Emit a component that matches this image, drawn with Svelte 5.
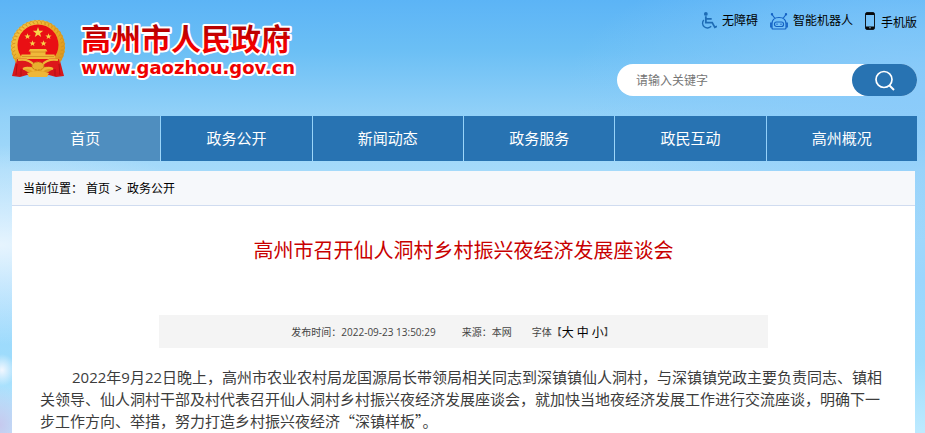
<script>
  const nav = ['首页', '政务公开', '新闻动态', '政务服务', '政民互动', '高州概况'];
  const star = 'M0-5L1.2-1.6 4.8-1.5 1.9.6 2.9 4 0 2-2.9 4-1.9.6-4.8-1.5-1.2-1.6Z';
  const beads = Array.from({ length: 30 }, (_, i) => 140 + (i * 260) / 29);
  let keyword = $state('');
</script>

<div class="page">
  <header>
    <a class="brand" href="#home" aria-label="高州市人民政府">
      <svg class="emblem" width="56" height="60" viewBox="0 0 56 60" aria-hidden="true">
        <defs>
          <linearGradient id="gold" x1="0" y1="0" x2="1" y2="1">
            <stop offset="0" stop-color="#f9cf52" />
            <stop offset=".5" stop-color="#e9aa26" />
            <stop offset="1" stop-color="#d98f1c" />
          </linearGradient>
        </defs>
        <path d="M7 38L2 57 10 58 17 56 28 58 39 56 46 58 54 57 49 38Z" fill="#d4171b" />
        <circle cx="28" cy="28" r="27" fill="url(#gold)" />
        {#each beads as a}
          <path d="M23-2Q25-4 27-1Q25 2 23 2" fill="none" stroke="#d2921f" stroke-width=".6" transform="translate(28 28) rotate({a})" />
        {/each}
        <circle cx="28" cy="26" r="20.5" fill="#e90f14" />
        <path d={star} transform="translate(28 13.500) scale(1.1)" fill="#f8d34a" />
        <path d={star} transform="translate(17.500 17.500) scale(.65)" fill="#f8d34a" />
        <path d={star} transform="translate(38.500 17.500) scale(.65)" fill="#f8d34a" />
        <path d={star} transform="translate(22.500 24.500) scale(.65)" fill="#f8d34a" />
        <path d={star} transform="translate(33.500 24.500) scale(.65)" fill="#f8d34a" />
        <path d="M20 30h16l1.500 2.500h-2v3h9l1 4.500h-35l1-4.500h9v-3h-2z" fill="#f0b93a" />
        <path d="M20 33h16M12 37.500h32" stroke="#cf8a20" stroke-width=".8" />
        <path d="M7 40Q18 38 28 44Q38 38 49 40L52 55Q44 53 42 49Q36 46 28 50Q20 46 14 49Q12 53 4 55Z" fill="#dd171b" />
        <path d="M8 41Q18 39 24 46M48 41Q38 39 32 46M13 50Q19 47 24 52M43 50Q37 47 32 52" fill="none" stroke="#efb738" stroke-width="2.200" />
        <ellipse cx="28" cy="47" rx="6" ry="4" fill="#e9ae2e" stroke="#c37e19" stroke-width="1" stroke-dasharray="2 1" />
        <path d="M17 54Q28 50 39 54L37 58H19Z" fill="#efb738" />
        <path d="M7 45L6 56M49 45L50 56M11 50L11 57M45 50L45 57" fill="none" stroke="#b30e14" stroke-width="1" />
      </svg>
      <svg class="name" width="224" height="64" viewBox="0 0 224 64">
        <defs>
          <linearGradient id="red" gradientUnits="userSpaceOnUse" x1="0" y1="4" x2="0" y2="32">
            <stop offset=".3" stop-color="#b80000" />
            <stop offset=".75" stop-color="#f00000" />
          </linearGradient>
        </defs>
        <text class="cn" x="3" y="31" fill="url(#red)">高州市人民政府</text>
        <text class="url" x="3" y="55" fill="#ee0000">www.gaozhou.gov.cn</text>
      </svg>
    </a>

    <div class="tools">
      <ul class="links">
        <li>
          <a href="#accessible">
            <svg width="17" height="18" viewBox="0 0 16 17" fill="none" stroke="#1e6cb5">
              <circle cx="5.500" cy="1.800" r="1.800" fill="#1e6cb5" stroke="none" />
              <path d="M5.500 4v6h6l2.500 4.500 2-1M6 6.500h5" stroke-width="1.700" />
              <path d="M3.500 7.500a4.600 4.600 0 1 0 7 6" stroke-width="1.300" />
            </svg>
            无障碍
          </a>
        </li>
        <li>
          <a href="#robot">
            <svg width="18" height="17" viewBox="0 0 18 17" fill="none" stroke="#1462c4" stroke-width="1.200">
              <path d="M2 1.500l3 4M16 1.500l-3 4M2 11Q2 4.500 9 4.500T16 11V15Q16 16 15 16H3Q2 16 2 15ZM2 10H.7v4H2M16 10h1.300v4H16" />
              <rect x="4.500" y="9" width="9" height="4.500" rx="2" />
              <path d="M6.500 11.200h1M10.500 11.200h1" stroke-width="1.500" />
              <circle cx="2" cy="1.200" r=".6" /><circle cx="16" cy="1.200" r=".6" />
            </svg>
            智能机器人
          </a>
        </li>
        <li class="mobile">
          <a href="#mobile">
            <svg width="10" height="18" viewBox="0 0 10 18">
              <rect x=".5" y=".5" width="9" height="17" rx="1.500" fill="none" stroke="#10181f" />
              <path d="M1 1h8v2H1zM1 14.500h8V17H1z" fill="#080808" />
              <circle cx="5" cy="15.800" r=".7" fill="#9bd1f4" />
            </svg>
            <span>手机版</span>
          </a>
        </li>
      </ul>
      <form class="search" onsubmit={(e) => e.preventDefault()}>
        <input type="text" aria-label="请输入关键字" placeholder="请输入关键字" bind:value={keyword} />
        <button aria-label="搜索">
          <svg width="20" height="21" viewBox="0 0 20 21" fill="none" stroke="#fff" stroke-width="1.700">
            <circle cx="9" cy="9.500" r="8" /><path d="M14.500 15.500l4.500 4.500" stroke-width="2" />
          </svg>
        </button>
      </form>
    </div>
  </header>

  <nav>
    {#each nav as item, i}
      <a href="#nav{i}" class:active={i === 0}>{item}</a>
    {/each}
  </nav>

  <main>
    <div class="crumbs">
      <span>当前位置：</span>
      <a href="#home">首页</a><span class="sep">&gt;</span><a href="#open">政务公开</a>
    </div>
    <article>
      <h1>高州市召开仙人洞村乡村振兴夜经济发展座谈会</h1>
      <div class="meta">
        <span class="date">发布时间：2022-09-23 13:50:29</span>
        <span class="source">来源：本网</span>
        <span class="size">字体<span>【</span><button>大</button><button>中</button><button>小</button>】</span>
      </div>
      <p>2022年9月22日晚上，高州市农业农村局龙国源局长带领局相关同志到深镇镇仙人洞村，与深镇镇党政主要负责同志、镇相关领导、仙人洞村干部及村代表召开仙人洞村乡村振兴夜经济发展座谈会，就加快当地夜经济发展工作进行交流座谈，明确下一步工作方向、举措，努力打造乡村振兴夜经济<span class="quote">“深镇样板”</span>。</p>
    </article>
  </main>
</div>

<style>
  :global(body) { margin: 0; overflow: hidden; }
  .page {
    min-height: 100vh;
    box-sizing: border-box;
    padding: 0 8px 0 10px;
    font-family: "Open Sans", "Noto Sans CJK SC", sans-serif;
    font-size: 12px;
    color: #000;
    background:
      radial-gradient(ellipse 14px 16px at 2px 370px, #f2f7ff, transparent),
      radial-gradient(ellipse 30px 40px at 0 425px, #c6c9ee, transparent),
      radial-gradient(ellipse 260px 100px at 0 245px, #e6f4fe, transparent),
      radial-gradient(ellipse 360px 150px at 100% 90px, #8bcbfa, transparent),
      linear-gradient(#5cb4f6 0, #6bbff5 50px, #92d1f8 115px, #a5dafa 170px, #9bd6fd 280px, #9edcfc 360px, #bdeaff 433px);
  }
  a { color: inherit; text-decoration: none; }
  button { border: 0; padding: 0; font: inherit; cursor: pointer; }
  svg { display: block; flex: none; }
  header { display: flex; justify-content: space-between; height: 116px; }
  .brand { display: flex; align-items: flex-start; gap: 12px; padding-top: 19px; }
  .name { overflow: visible; }
  .name text { font-weight: 700; stroke: #fff; stroke-width: 4px; stroke-linejoin: round; paint-order: stroke; }
  .cn { font-family: "Noto Sans CJK SC", sans-serif; font-size: 30px; }
  .url { font-family: "DejaVu Sans", sans-serif; font-size: 18px; }
  .tools { display: flex; flex-direction: column; align-items: flex-end; gap: 24px; padding-top: 10px; }
  .links { display: flex; gap: 12px; margin: 0; padding: 0; list-style: none; height: 30px; line-height: 20px; }
  .links a { display: flex; align-items: center; gap: 5px; height: 22px; }
  .links .mobile a { gap: 6px; }
  .links span { padding-top: 4px; }
  .search { display: flex; width: 300px; height: 32px; border-radius: 16px; background: #fff; }
  .search input {
    flex: 1; min-width: 0; border: 0; outline: 0; padding: 0 0 0 19px;
    background: none; font: inherit;
  }
  .search input::placeholder { color: #757575; opacity: 1; }
  .search button {
    display: flex; align-items: center; justify-content: center;
    width: 65px; border-radius: 16px; background: #2873b2;
  }
  nav { display: grid; grid-template-columns: repeat(6, 1fr); gap: 1px; }
  nav a { line-height: 45px; text-align: center; font-size: 15px; color: #fff; background: #2873b2; }
  nav a.active { background: #4f8ebf; }
  main { margin: 10px 2px 0; min-height: 262px; background: #fff; }
  .crumbs {
    display: flex; height: 34px; line-height: 36px; padding-left: 11px;
    background: #f6f8fb; border-bottom: 1px solid #d0dcf0;
  }
  .crumbs a:first-of-type { margin-left: 3px; }
  .sep { margin: 0 5px; }
  article { padding: 0 28px; color: #3c3c3c; }
  h1 { margin: 0; padding-top: 30px; font-size: 20px; font-weight: 400; line-height: 30px; text-align: center; color: #c80000; }
  .meta {
    display: flex; justify-content: center; align-items: center; box-sizing: border-box;
    width: 72%; height: 33px; margin: 49px auto 18px; padding-right: 22px;
    background: #f4f4f4; font-size: 10px; color: #444;
  }
  .date { margin-right: 26px; }
  .source { margin-right: 20px; }
  .size { display: flex; align-items: center; }
  .size button { background: none; font-size: 12px; color: #000; margin-right: 3px; }
  .size button:last-of-type { margin-right: 0; }
  p { margin: 0; font-size: 15px; line-height: 22px; text-indent: 32px; }
  .quote { font-family: "Noto Sans CJK SC", sans-serif; }
</style>
